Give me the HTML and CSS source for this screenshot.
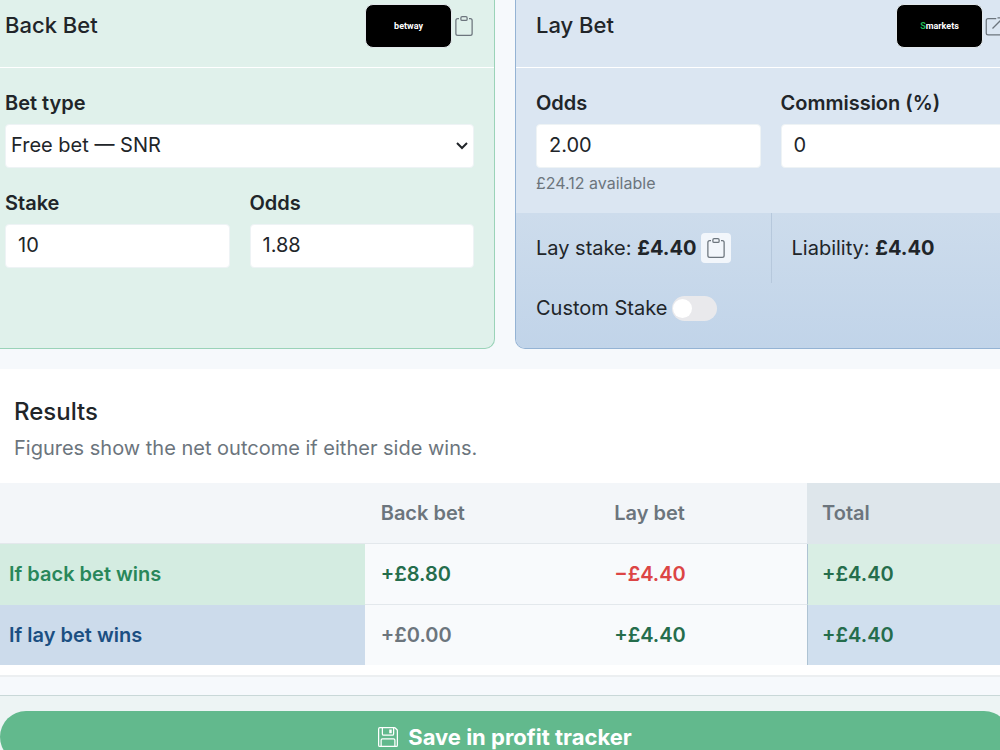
FILE: index.html
```
<!DOCTYPE html>
<html lang="en">

<head>
    <meta charset="utf-8">
    <meta name="viewport" content="width=device-width, initial-scale=1">
    <title>Bet calculator</title>
    <link rel="stylesheet" href="styles.css">
</head>

<body>

    <svg class="sprite" aria-hidden="true">
        <symbol id="clipboard" viewBox="0 0 16 16">
            <path d="M4 1.500H3a2 2 0 0 0-2 2V14a2 2 0 0 0 2 2h10a2 2 0 0 0 2-2V3.500a2 2 0 0 0-2-2h-1v1h1a1 1 0 0 1 1 1V14a1 1 0 0 1-1 1H3a1 1 0 0 1-1-1V3.500a1 1 0 0 1 1-1h1z"/>
            <path d="M9.500 1a.5.5 0 0 1 .5.5v1a.5.5 0 0 1-.5.5h-3a.5.5 0 0 1-.5-.5v-1a.5.5 0 0 1 .5-.5zm-3-1A1.500 1.500 0 0 0 5 1.500v1A1.500 1.500 0 0 0 6.500 4h3A1.500 1.500 0 0 0 11 2.500v-1A1.500 1.500 0 0 0 9.500 0z"/>
        </symbol>
        <symbol id="open" viewBox="0 0 16 16">
            <path d="M9 2H2.500A1.500 1.500 0 0 0 1 3.500v10A1.500 1.500 0 0 0 2.500 15h10a1.500 1.500 0 0 0 1.500-1.500V7M10 1.500h4.500V6M14.500 1.500L6 10" fill="none" stroke="currentColor"/>
        </symbol>
        <symbol id="floppy" viewBox="0 0 16 16">
            <path d="M11 2H9v3h2z"/>
            <path d="M1.500 0h11.586a1.500 1.500 0 0 1 1.060.44l1.415 1.414A1.500 1.500 0 0 1 16 2.914V14.500a1.500 1.500 0 0 1-1.500 1.500h-13A1.500 1.500 0 0 1 0 14.500v-13A1.500 1.500 0 0 1 1.500 0M1 1.500v13a.5.5 0 0 0 .5.5H2v-4.500A1.500 1.500 0 0 1 3.500 9h9a1.500 1.500 0 0 1 1.500 1.500V15h.5a.5.5 0 0 0 .5-.5V2.914a.5.5 0 0 0-.146-.353l-1.415-1.415A.5.5 0 0 0 13.086 1H13v4.500A1.500 1.500 0 0 1 11.500 7h-7A1.500 1.500 0 0 1 3 5.500V1H1.500a.5.5 0 0 0-.5.5m3 4a.5.5 0 0 0 .5.5h7a.5.5 0 0 0 .5-.5V1H4zM3 15h10v-4.500a.5.5 0 0 0-.5-.5h-9a.5.5 0 0 0-.5.5z"/>
        </symbol>
        <symbol id="chevron" viewBox="0 0 12 8">
            <path d="M1 1l5 5 5-5" fill="none" stroke="currentColor" stroke-width="2"/>
        </symbol>
    </svg>

    <form class="calculator">
        <div class="bets">

            <section class="card back">
                <div class="card-header">
                    <h2>Back Bet</h2>
                    <span class="logo">betway</span>
                    <button type="button" class="icon-btn" aria-label="Copy back bet"><svg class="icon"><use href="#clipboard"/></svg></button>
                </div>
                <div class="card-body">
                    <div class="field wide">
                        <label for="betType">Bet type</label>
                        <div class="select-wrap">
                            <select id="betType">
                                <option>Qualifying bet</option>
                                <option selected>Free bet — SNR</option>
                                <option>Free bet — SR</option>
                            </select>
                            <svg class="chevron"><use href="#chevron"/></svg>
                        </div>
                    </div>
                    <div class="field">
                        <label for="stake">Stake</label>
                        <input id="stake" type="text" inputmode="decimal" value="10">
                    </div>
                    <div class="field">
                        <label for="backOdds">Odds</label>
                        <input id="backOdds" type="text" inputmode="decimal" value="1.88">
                    </div>
                </div>
            </section>

            <section class="card lay">
                <div class="card-header">
                    <h2>Lay Bet</h2>
                    <span class="logo"><span><i>S</i>markets</span></span>
                    <a href="#" class="icon-btn" aria-label="Open exchange"><svg class="icon"><use href="#open"/></svg></a>
                </div>
                <div class="card-body">
                    <div class="field">
                        <label for="layOdds">Odds</label>
                        <input id="layOdds" type="text" inputmode="decimal" value="2.00">
                        <small>£24.12 available</small>
                    </div>
                    <div class="field">
                        <label for="commission">Commission (%)</label>
                        <input id="commission" type="text" inputmode="decimal" value="0">
                    </div>
                </div>
                <div class="lay-info">
                    <div class="lay-cell">
                        <span>Lay stake: <b>£4.40</b></span>
                        <button type="button" class="copy-btn" aria-label="Copy lay stake"><svg class="icon"><use href="#clipboard"/></svg></button>
                    </div>
                    <div class="lay-cell">
                        <span>Liability: <b>£4.40</b></span>
                    </div>
                    <div class="custom">
                        <label for="customStake">Custom Stake</label>
                        <input id="customStake" type="checkbox" class="switch">
                    </div>
                </div>
            </section>

        </div>

        <section class="results">
            <div class="results-head">
                <h2>Results</h2>
                <p>Figures show the net outcome if either side wins.</p>
            </div>
            <table>
                <thead>
                    <tr>
                        <th class="col-label"></th>
                        <th class="col-back">Back bet</th>
                        <th class="col-lay">Lay bet</th>
                        <th class="total">Total</th>
                    </tr>
                </thead>
                <tbody>
                    <tr class="row-back">
                        <th>If back bet wins</th>
                        <td class="pos">+£8.80</td>
                        <td class="neg">−£4.40</td>
                        <td class="pos total">+£4.40</td>
                    </tr>
                    <tr class="row-lay">
                        <th>If lay bet wins</th>
                        <td>+£0.00</td>
                        <td class="pos">+£4.40</td>
                        <td class="pos total">+£4.40</td>
                    </tr>
                </tbody>
            </table>
        </section>

        <footer>
            <button type="submit" class="save"><svg class="icon"><use href="#floppy"/></svg>Save in profit tracker</button>
        </footer>
    </form>

</body>

</html>
```
FILE: styles.css
```
* {
    box-sizing: border-box;
}

body {
    margin: 0;
    overflow: hidden;
    background: #f6f9fc;
    color: #212529;
    font-family: Inter, "Liberation Sans", sans-serif;
    font-size: 20px;
    line-height: 30px;
}

h2, p {
    margin: 0;
}

h2 {
    font-size: 22px;
    font-weight: 500;
}

button, input, select {
    font: inherit;
    color: inherit;
}

.sprite {
    display: none;
}

.icon {
    display: block;
    width: 20px;
    height: 20px;
    fill: currentColor;
}

/* bets */

.bets {
    display: grid;
    grid-template-columns: 1fr 1fr;
    gap: 20px;
    margin: 0 -26px 20px -16px;
}

.card {
    border: 1px solid;
    border-top: 0;
    border-radius: 0 0 10px 10px;
    overflow: hidden;
}

.back {
    background: #e0f1eb;
    border-color: #9ad3b8;
}

.lay {
    background: #dbe6f2;
    border-color: #94b3d4;
}

.card-header {
    display: flex;
    align-items: center;
    padding: 4px 20px 19px;
    border-bottom: 1px solid #fff;
}

.card-header h2 {
    flex: 1;
    line-height: 28px;
    padding-bottom: 2px;
}

.logo {
    display: flex;
    align-items: center;
    justify-content: center;
    width: 87px;
    height: 44px;
    border: 1px solid #e3e9ec;
    border-radius: 8px;
    background: #000;
    color: #fff;
    font: bold 9px Roboto, sans-serif;
}

.logo i {
    color: #1db954;
    font-style: normal;
}

.icon-btn {
    margin-left: 2px;
    padding: 0;
    border: 0;
    background: none;
    color: #6c757d;
}

.card-body {
    display: grid;
    grid-template-columns: 1fr 1fr;
    gap: 20px;
    padding: 20px;
}

.wide {
    grid-column: span 2;
}

.field label {
    display: block;
    margin-bottom: 6px;
    font-weight: 600;
}

.field input, .field select {
    display: block;
    width: 100%;
    height: 44px;
    padding: 0 12px 2px;
    border: 1px solid #eef3f5;
    border-radius: 4px;
    background: #fff;
}

.field select {
    appearance: none;
    padding: 0 5px 2px;
}

.select-wrap {
    position: relative;
}

.chevron {
    position: absolute;
    top: 18px;
    right: 6px;
    width: 12px;
    height: 8px;
    pointer-events: none;
}

.field small {
    display: block;
    margin-top: 6px;
    color: #6c757d;
    font-size: 16px;
    line-height: 19px;
}

.lay-info {
    display: grid;
    grid-template-columns: 1fr 1fr;
    background: linear-gradient(#cddcec, #c1d4e9);
}

.lay-cell {
    display: flex;
    align-items: center;
    gap: 5px;
    padding: 20px;
}

.lay-cell + .lay-cell {
    border-left: 1px solid #b6c8dc;
}

.copy-btn {
    padding: 5px;
    border: 0;
    border-radius: 4px;
    background: #f2f6fb;
    color: #6c757d;
}

.custom {
    display: flex;
    align-items: center;
    gap: 5px;
    grid-column: span 2;
    padding: 10px 20px 25px;
}

.switch {
    appearance: none;
    width: 45px;
    height: 25px;
    margin: 0;
    padding: 3px 1px;
    border-radius: 13px;
    background: #e9e9ec;
}

.switch::before {
    content: "";
    display: block;
    width: 19px;
    height: 19px;
    border-radius: 50%;
    background: #fff;
}

.switch:checked {
    padding-left: 25px;
    background: #62b98d;
}

/* results */

.results {
    margin: 0 -17px 0 -7px;
    padding-bottom: 10px;
    border-bottom: 2px solid #eceff1;
    background: #fff;
}

.results-head {
    padding: 28px 21px 20px;
}

.results-head h2 {
    font-size: 24px;
}

.results-head p {
    margin-top: 6px;
    color: #6c757d;
}

table {
    width: 100%;
    table-layout: fixed;
    border-collapse: separate;
    border-spacing: 0;
    background: #f8fafc;
    color: #6c757d;
}

th, td {
    height: 61px;
    padding: 0 16px;
    border-bottom: 1px solid #e3e8ec;
    font-weight: 600;
    text-align: left;
}

thead th {
    background: #f3f6f9;
}

tbody tr:last-child > * {
    height: 60px;
    border-bottom: 0;
}

.col-label {
    width: 36.3%;
}

.col-back {
    width: 22.8%;
}

.col-lay {
    width: 20.4%;
}

.pos {
    color: #256d4c;
}

.neg {
    color: #dc4545;
}

thead .total {
    padding-left: 15px;
    border-color: #dee6eb;
    background: #dee6eb;
}

tbody .total {
    padding-left: 14px;
    border-left: 1px solid #aec3d3;
}

.row-back th {
    border-color: #d4ece1;
    background: #d4ece1;
    color: #28875a;
}

.row-back .total {
    border-bottom-color: #d9eee4;
    background: #d9eee4;
}

.row-lay th {
    background: #ccdbeb;
    color: #1b4f82;
}

.row-lay .total {
    background: #d0dfee;
}

/* save bar */

footer {
    margin: 18px -10px 0 0;
    padding: 15px 0;
    border-top: 1px solid #c9d8d8;
    background: #edf4f4;
}

.save {
    display: flex;
    align-items: center;
    justify-content: center;
    gap: 10px;
    width: 100%;
    height: 52px;
    border: 0;
    border-radius: 26px;
    background: #62b98d;
    color: #fff;
    font-size: 22px;
    font-weight: 700;
}
```
